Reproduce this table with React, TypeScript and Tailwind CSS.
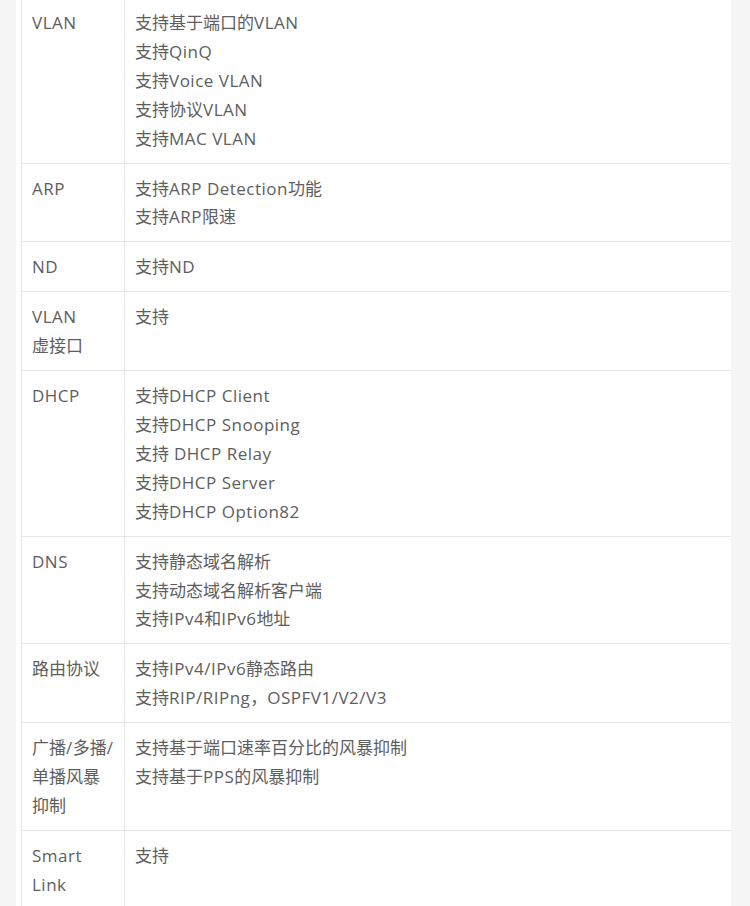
const rows: { label: string[]; items: string[] }[] = [
  {
    label: ["VLAN"],
    items: ["支持基于端口的VLAN", "支持QinQ", "支持Voice VLAN", "支持协议VLAN", "支持MAC VLAN"],
  },
  { label: ["ARP"], items: ["支持ARP Detection功能", "支持ARP限速"] },
  { label: ["ND"], items: ["支持ND"] },
  { label: ["VLAN", "虚接口"], items: ["支持"] },
  {
    label: ["DHCP"],
    items: [
      "支持DHCP Client",
      "支持DHCP Snooping",
      "支持 DHCP Relay",
      "支持DHCP Server",
      "支持DHCP Option82",
    ],
  },
  { label: ["DNS"], items: ["支持静态域名解析", "支持动态域名解析客户端", "支持IPv4和IPv6地址"] },
  { label: ["路由协议"], items: ["支持IPv4/IPv6静态路由", "支持RIP/RIPng，OSPFV1/V2/V3"] },
  {
    label: ["广播/多播/", "单播风暴", "抑制"],
    items: ["支持基于端口速率百分比的风暴抑制", "支持基于PPS的风暴抑制"],
  },
  { label: ["Smart", "Link"], items: ["支持"] },
]

// latin runs are a touch wider in the original font, so space them out slightly
function Line({ text }: { text: string }) {
  const parts = text.split(/([\x20-\x7e]+)/).filter(Boolean)
  return (
    <div className="whitespace-nowrap">
      {parts.map((p, i) =>
        /^[\x20-\x7e]+$/.test(p) ? (
          <span key={i} className="tracking-[0.5px]">{p}</span>
        ) : (
          <span key={i}>{p}</span>
        )
      )}
    </div>
  )
}

export default function App() {
  return (
    <div
      className="flex h-[906px] w-[750px] overflow-hidden bg-[#f5f5f5] text-[17px] leading-[28.9px] text-[#5e5e5e]"
      style={{ fontFamily: '"Open Sans", "Noto Sans CJK SC", sans-serif' }}
    >
      {/* left page gutter */}
      <div className="w-[16px] shrink-0" />

      {/* content panel */}
      <div className="w-[715px] shrink-0 bg-white pl-[5px]">
        <table className="-mt-[3px] w-full table-fixed border-collapse">
          <colgroup>
            <col className="w-[103px]" />
            <col />
          </colgroup>
          <tbody>
            {rows.map((row, i) => (
              <tr key={i} className="border-y border-[#e6e6e6] align-top">
                <td className="border-x border-[#e6e6e6] px-[10px] pt-[11px] pb-[9px]">
                  {row.label.map((l) => (
                    <Line key={l} text={l} />
                  ))}
                </td>
                <td className="border-l border-[#e6e6e6] px-[10px] pt-[11px] pb-[9px]">
                  {row.items.map((t) => (
                    <Line key={t} text={t} />
                  ))}
                </td>
              </tr>
            ))}
          </tbody>
        </table>
      </div>

      {/* right page gutter */}
      <div className="flex-1" />
    </div>
  )
}
